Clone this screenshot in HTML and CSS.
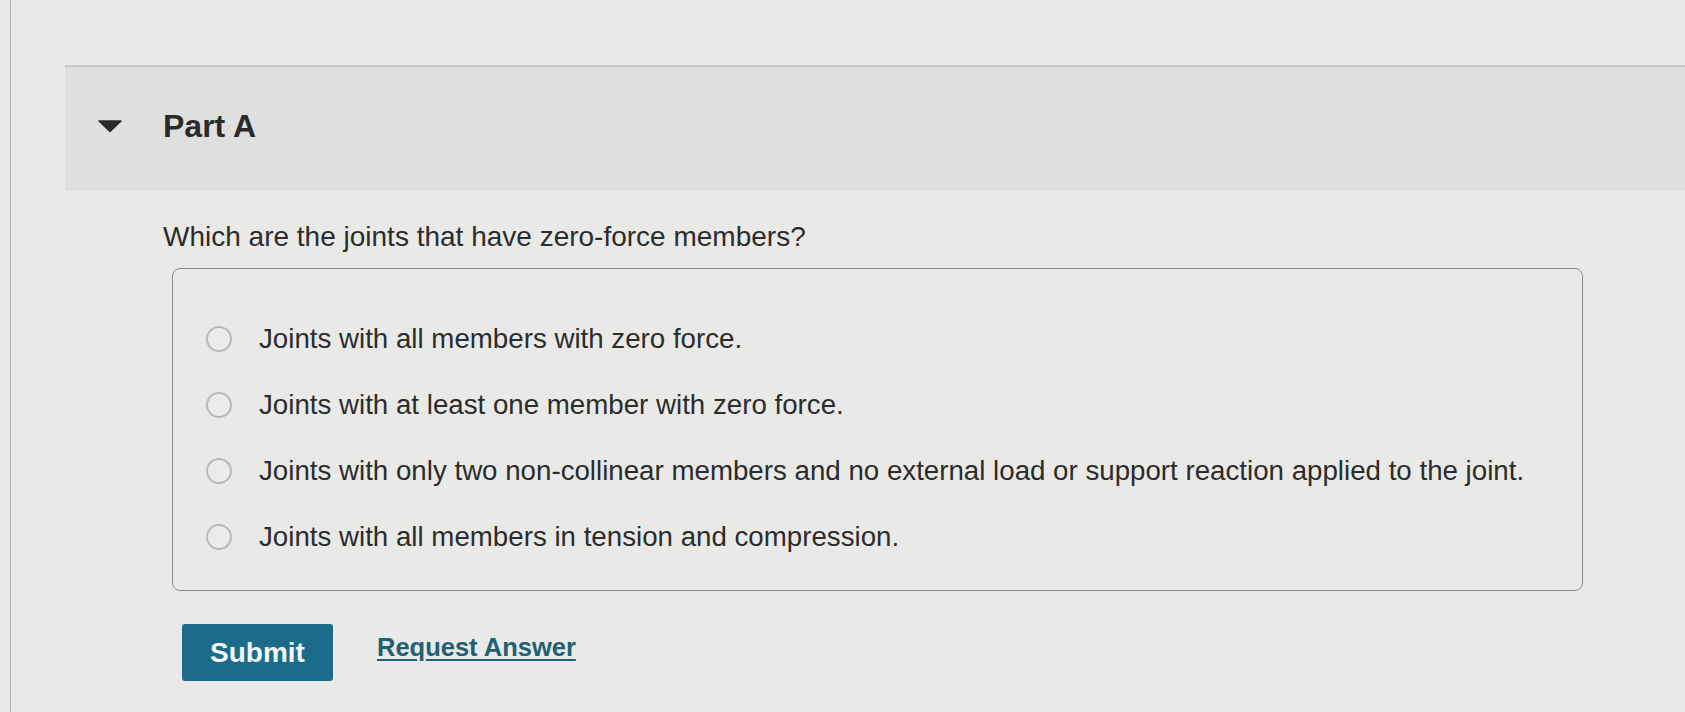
FILE: index.html
```html
<!DOCTYPE html>
<html lang="en">
<head>
<meta charset="utf-8">
<title>Part A</title>
<link rel="stylesheet" href="styles.css">
</head>
<body>
<div class="page">
  <section class="part">
    <header class="part-head">
      <svg class="caret" width="24" height="12" viewBox="0 0 24 12"><path d="M1 1 H23 L12 11.5 Z" fill="#2a2a2a" stroke="#2a2a2a" stroke-width="1.5" stroke-linejoin="round"/></svg>
      <h2 class="part-title">Part A</h2>
    </header>
    <div class="part-body">
      <p class="question">Which are the joints that have zero-force members?</p>
      <div class="choices">
        <label class="choice"><span class="radio"></span><span class="choice-text">Joints with all members with zero force.</span></label>
        <label class="choice"><span class="radio"></span><span class="choice-text">Joints with at least one member with zero force.</span></label>
        <label class="choice"><span class="radio"></span><span class="choice-text">Joints with only two non-collinear members and no external load or support reaction applied to the joint.</span></label>
        <label class="choice"><span class="radio"></span><span class="choice-text">Joints with all members in tension and compression.</span></label>
      </div>
      <div class="actions">
        <button class="submit" type="button">Submit</button>
        <a class="request" href="#">Request Answer</a>
      </div>
    </div>
  </section>
</div>
</body>
</html>
```

FILE: styles.css
```css
html, body {
  margin: 0;
  padding: 0;
  background: #e8e9e7;
  font-family: "Liberation Sans", Arial, sans-serif;
  color: #2c2c2c;
}

.page {
  margin-left: 10px;
  border-left: 1px solid #b4b5b3;
  min-height: 712px;
  padding-top: 65px;
  padding-left: 54px;
  box-sizing: border-box;
  background: #e9eae8;
}

.part-head {
  display: flex;
  align-items: center;
  height: 126px;
  border-top: 2px solid #c6c7c5;
  background: #dfe0de;
  padding-left: 33px;
  padding-bottom: 6px;
  box-sizing: border-box;
}

.caret {
  display: block;
  flex: none;
}

.part-title {
  margin: 0 0 0 41px;
  font-size: 32px;
  line-height: 36px;
  font-weight: 700;
  color: #2a2a2a;
}

.part-body {
  padding-left: 98px;
  padding-top: 31px;
}

.question {
  margin: 0;
  font-size: 28px;
  line-height: 30px;
  color: #2c2c2c;
}

.choices {
  margin-top: 16px;
  margin-left: 9px;
  width: 1411px;
  box-sizing: border-box;
  border: 1px solid #8c8d8b;
  border-radius: 8px;
  padding: 55px 0 38px 33px;
  display: flex;
  flex-direction: column;
  gap: 36px;
}

.choice {
  display: flex;
  align-items: center;
  gap: 27px;
  font-size: 27.7px;
  line-height: 30px;
}

.radio {
  flex: none;
  width: 22px;
  height: 22px;
  border: 2px solid #b9bab8;
  border-radius: 50%;
  background: #ebecea;
}

.choice-text {
  color: #2c2c2c;
}

.actions {
  display: flex;
  align-items: flex-start;
  margin-top: 33px;
  margin-left: 19px;
  gap: 44px;
}

.submit {
  width: 151px;
  height: 57px;
  border: none;
  border-radius: 3px;
  background: #1b6c8b;
  color: #f2f6f8;
  font-family: "Liberation Sans", Arial, sans-serif;
  font-size: 28px;
  font-weight: 700;
  padding: 0;
  cursor: pointer;
}

.request {
  margin-top: 8px;
  font-size: 25.5px;
  line-height: 30px;
  font-weight: 700;
  color: #245e72;
  text-decoration: underline;
  text-underline-offset: 3px;
}
```
